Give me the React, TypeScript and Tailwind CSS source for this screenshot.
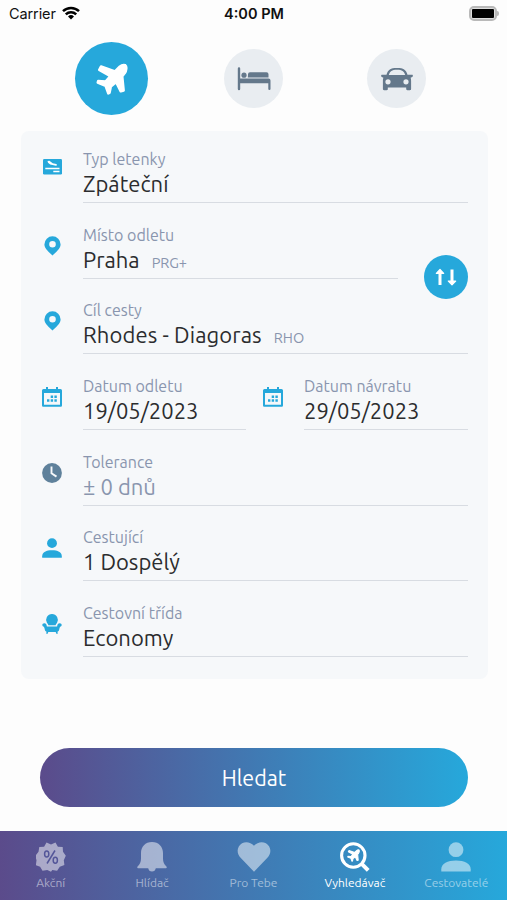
import React from 'react'
import clsx from 'clsx'

interface IconProps {
  className?: string
}

function PlaneIcon({ className }: IconProps) {
  return (
    <svg viewBox="0 0 32 32" className={className} fill="currentColor" stroke="currentColor" strokeWidth="2.600" strokeLinejoin="round">
      <path d="M29.300 2.300c-1.700-.7-4 .1-5.600 1.500L19 8.400 5 3.600 3.300 6.800 14.400 13.200l-4.800 5.300-7.400-.4-.4 1.400 7.800 3.400L12.300 30.300l1.200-.5 1.300-6.400 5.400-4.300 4.600 9.200 2.800-.8L26.200 13.300l2.600-3.300c1.400-2 2.200-6.600.5-7.700z" />
    </svg>
  )
}

function BedIcon({ className }: IconProps) {
  return (
    <svg viewBox="0 0 34 24" className={className} fill="currentColor">
      <path d="M.8 1.500a1.200 1.200 0 0 1 2.400 0v10h28.300a2 2 0 0 1 2 2V22a1.100 1.100 0 0 1-2.200 0v-5.700H3.200V22a1.200 1.200 0 0 1-2.400 0z" />
      <circle cx="7" cy="8.200" r="2.600" />
      <path d="M13 5.200h16.500a2 2 0 0 1 2 2v3.200H10.800l.2-3.200a2 2 0 0 1 2-2z" />
    </svg>
  )
}

function CarIcon({ className }: IconProps) {
  return (
    <svg viewBox="0 0 32 24" className={className} fill="currentColor" fillRule="evenodd">
      <path d="M5.500 7.700C7 2.800 9.400 1 16 1s9 1.800 10.500 6.700h4.700c.9 0 .9 2 0 2.300l-1.600.7c.4.900.5 1.800.5 3.300v8c0 .8-.5 1.200-1.200 1.200h-2.500c-.8 0-1.200-.5-1.200-1.200v-1.500H6.800V22c0 .8-.5 1.200-1.200 1.200H3.100c-.7 0-1.200-.4-1.200-1.200v-8c0-1.500.1-2.400.5-3.300L.8 10c-.9-.3-.9-2.300 0-2.300zm2.300.300h16.400C23 4.200 21.300 2.700 16 2.700S9 4.200 7.800 8zM7 12.200a2.600 2.600 0 1 0 0 5.200 2.600 2.600 0 0 0 0-5.200zm18 0a2.600 2.600 0 1 0 0 5.200 2.600 2.600 0 0 0 0-5.200z" />
    </svg>
  )
}

function TicketIcon() {
  return (
    <svg viewBox="0 0 19 16" className="h-4 w-[19px]">
      <rect width="19" height="15.500" rx="1.200" fill="#26a8db" />
      <path d="M4.500 2l1.900-.2 3.300 2.400 3.500.8c1.200.5.9 1.800-.3 1.700L7.200 5.600 5 3.800z" fill="white" />
      <path d="M2.300 9.500h14.200M10.300 12.500h6.200" stroke="white" strokeWidth="1.700" />
    </svg>
  )
}

function PinIcon() {
  return (
    <svg viewBox="0 0 17 20" className="h-5 w-[17px]">
      <path d="M8.500.300A8.100 8.100 0 0 0 .400 8.400c0 4.300 4.800 7.600 8.100 11.200 3.300-3.600 8.100-6.900 8.100-11.200A8.100 8.100 0 0 0 8.500.300zm0 4.700a3.300 3.300 0 1 1 0 6.600 3.300 3.300 0 0 1 0-6.600z" fill="#26a8db" fillRule="evenodd" />
    </svg>
  )
}

function CalendarIcon() {
  return (
    <svg viewBox="0 0 20 20" className="h-5 w-5" fill="#26a8db">
      <path d="M1.500 2H4V0h2v2h8V0h2v2h2.500A1.500 1.500 0 0 1 20 3.500v15a1.300 1.300 0 0 1-1.500 1.300h-17A1.300 1.300 0 0 1 0 18.500v-15A1.500 1.500 0 0 1 1.500 2zM2 6v11.800h16V6z" fillRule="evenodd" />
      <path d="M8.700 8.500h2.400v2.400H8.700zM12.400 8.500h2.400v2.400h-2.400zM5 12.300h2.400v2.400H5zM8.700 12.300h2.400v2.400H8.700zM12.400 12.300h2.400v2.400h-2.400z" />
    </svg>
  )
}

function ClockIcon() {
  return (
    <svg viewBox="0 0 20 20" className="h-5 w-5">
      <circle cx="10" cy="10" r="9.900" fill="#5f819b" />
      <path d="M9.500 3.500v6.700l5 3.400" fill="none" stroke="#f6f8fa" strokeWidth="1.900" />
    </svg>
  )
}

function PersonIcon({ className }: IconProps) {
  return (
    <svg viewBox="0 0 30 30" className={className} fill="currentColor">
      <circle cx="15" cy="7.700" r="7.400" />
      <path d="M.3 29.500v-2.300c0-5.700 6.200-8.700 14.700-8.700s14.700 3 14.700 8.700v2.300z" />
    </svg>
  )
}

function ArmchairIcon() {
  return (
    <svg viewBox="0 0 20 20" className="h-5 w-5" fill="#26a8db">
      <path d="M10 0a5.900 5.900 0 0 1 5 9c-.8.600-1.200 1.300-1.400 2.300H6.400C6.200 10.300 5.800 9.600 5 9A5.900 5.900 0 0 1 10 0z" />
      <path d="M2.300 9.300c1.700 0 2.200.8 2.600 3.200h10.200c.4-2.400.9-3.200 2.600-3.200 2.200 0 2.600 2.400 1 3.300-.8.400-1 .9-1.200 1.700-.3 2-.8 3.200-2 3.500l.3 1.900h-1.500l-.6-1.800H6.300l-.6 1.800H4.200l.3-1.900c-1.200-.3-1.700-1.500-2-3.500-.2-.8-.4-1.300-1.200-1.700-1.600-.9-1.200-3.300 1-3.300z" />
    </svg>
  )
}

function SwapIcon() {
  return (
    <svg viewBox="0 0 22 18" className="h-[18px] w-[22px]" fill="white" stroke="white" strokeLinejoin="round">
      <path d="M5 17V4M17 1.500v12" strokeWidth="3" />
      <path d="M5 1.500L1.300 5.300h7.400zM17 16.800l-3.700-3.800h7.400z" strokeWidth="1.200" />
    </svg>
  )
}

function BadgeIcon() {
  return (
    <svg viewBox="0 0 30 30" className="h-[30px] w-[30px]">
      <path d="M15 2.500L19.500.500l2.400 4.200 4.800.300.300 4.800 2.800 4-2 4.500.600 4.800-4.600 1.700-2.700 4-4.800-.8L15 29.800 11.300 28l-4.800.800-2.400-4-4.200-1.700.600-4.800-1.200-4.500L2.500 9.800 3.300 5l4.800-.3L10.500.5z" fill="currentColor" />
      <g fill="none" stroke="#545699" strokeWidth="1.500">
        <ellipse cx="10.700" cy="12" rx="2.100" ry="3" />
        <ellipse cx="19.300" cy="18.300" rx="2.100" ry="3" />
        <path d="M19 8.500l-8 13" />
      </g>
    </svg>
  )
}

function BellIcon() {
  return (
    <svg viewBox="0 0 30 30" className="h-[30px] w-[30px]" fill="currentColor">
      <path d="M15 0C8.300 0 4 4.800 4 11v5.500c0 3.500-1.200 5.700-3.200 7.700C-.2 25.200.2 26.300 1.500 26.300h9.700c.4 2 1.700 3.300 3.800 3.300s3.400-1.300 3.800-3.300h9.700c1.300 0 1.700-1.100.7-2.100-2-2-3.200-4.200-3.200-7.700V11C26 4.800 21.700 0 15 0z" />
    </svg>
  )
}

function HeartIcon() {
  return (
    <svg viewBox="0 0 34 30" className="h-[30px] w-[34px]" fill="currentColor">
      <path d="M17 3.700C12.500-1.500 4.800-.800 1.800 4.400c-2.200 4-1.100 8.300 1.800 11.400L17 29.800l13.400-14c2.900-3.100 4-7.400 1.800-11.400C29.200-.8 21.500-1.500 17 3.700z" />
    </svg>
  )
}

function SearchPlaneIcon() {
  return (
    <div className="relative h-[30px] w-[30px]">
      <svg viewBox="0 0 30 30" className="h-[30px] w-[30px]" fill="none" stroke="currentColor">
        <circle cx="13.300" cy="13.500" r="11.700" strokeWidth="3.100" />
        <path d="M21.500 21.700l6.700 6.700" strokeWidth="4" />
      </svg>
      <PlaneIcon className="absolute left-[7px] top-[7px] h-[13px] w-[13px]" />
    </div>
  )
}

interface FieldProps {
  icon: React.ReactNode
  iconClass?: string
  label: string
  value: string
  valueClass?: string
  code?: string
  className?: string
}

function Field({ icon, iconClass = 'mt-[11px]', label, value, valueClass, code, className }: FieldProps) {
  return (
    <div className={clsx('flex', className)}>
      <div className={clsx('flex h-5 w-5 shrink-0 items-center justify-center text-[#26a8db]', iconClass)}>{icon}</div>
      <div className="ml-[21px] h-[54px] flex-1 whitespace-nowrap border-b border-[#d8dce2]">
        <div className="h-5 text-base leading-5 text-[#8995ae]">{label}</div>
        <div className="flex h-7 items-baseline pt-px text-[22px] leading-7 text-[#2b2c2e]">
          <span className={valueClass}>{value}</span>
          {code && <span className="ml-3 text-[14.500px] text-[#8995ae]">{code}</span>}
        </div>
      </div>
    </div>
  )
}

const tabs = [
  { label: 'Akční', icon: <BadgeIcon /> },
  { label: 'Hlídač', icon: <BellIcon /> },
  { label: 'Pro Tebe', icon: <HeartIcon /> },
  { label: 'Vyhledávač', icon: <SearchPlaneIcon />, active: true },
  { label: 'Cestovatelé', icon: <PersonIcon className="h-[30px] w-[30px]" /> },
]

export default function App() {
  return (
    <div className="flex h-[900px] w-[507px] flex-col overflow-hidden bg-[#fdfdfd] font-['Ubuntu','Noto_Sans',sans-serif]">
      <header className="grid h-7 grid-cols-3 items-center pl-[9px] pr-[8px] font-['Inter',sans-serif] text-[14.500px] text-[#111]">
        <div className="flex items-center gap-[6px]">
          <span className="tracking-[-0.1px]">Carrier</span>
          <svg viewBox="0 0 18 14" className="mb-[2px] h-[14px] w-[18px]" fill="none" stroke="black" strokeWidth="2.500">
            <path d="M1 5.200a11.500 11.500 0 0 1 16 0M3.800 8.300a7.500 7.500 0 0 1 10.400 0" />
            <path d="M9 13.500l-3-3a4.300 4.300 0 0 1 6 0z" fill="black" stroke="none" />
          </svg>
        </div>
        <div className="text-center font-semibold">4:00 PM</div>
        <div className="mb-[2px] flex items-center justify-end">
          <div className="h-[15px] w-[28px] rounded-[5px] border-2 border-[#b9b9b9] bg-[#dedede] p-px">
            <div className="h-full rounded-[1px] bg-black" />
          </div>
          <div className="h-[5px] w-[2px] rounded-r-full bg-[#b9b9b9]" />
        </div>
      </header>

      <div className="mb-[2px] flex h-[101px] items-center pl-[75px]">
        <button className="flex h-[73px] w-[73px] items-center justify-center rounded-full bg-[#26a8db] text-white">
          <PlaneIcon className="h-8 w-8" />
        </button>
        <button className="ml-[76px] flex h-[59px] w-[59px] items-center justify-center rounded-full bg-[#e9edf1] text-[#64788b]">
          <BedIcon className="h-6 w-[34px]" />
        </button>
        <button className="ml-[84px] flex h-[59px] w-[59px] items-center justify-center rounded-full bg-[#e9edf1] text-[#64788b]">
          <CarIcon className="h-6 w-8" />
        </button>
      </div>

      <main className="relative ml-[21px] flex h-[548px] w-[467px] flex-col gap-[21.700px] rounded-lg bg-[#f6f8fa] pl-[21px] pr-5 pt-[17.900px]">
        <Field icon={<TicketIcon />} iconClass="mt-[8px]" label="Typ letenky" value="Zpáteční" />
        <Field icon={<PinIcon />} label="Místo odletu" value="Praha" code="PRG+" className="mr-[70px]" />
        <Field icon={<PinIcon />} label="Cíl cesty" value="Rhodes - Diagoras" valueClass="tracking-[0.1px]" code="RHO" />
        <div className="flex gap-[17px]">
          <Field icon={<CalendarIcon />} label="Datum odletu" value="19/05/2023" className="w-[204px]" />
          <Field icon={<CalendarIcon />} label="Datum návratu" value="29/05/2023" className="flex-1" />
        </div>
        <Field icon={<ClockIcon />} label="Tolerance" value="± 0 dnů" valueClass="text-[#8995ae]" />
        <Field icon={<PersonIcon className="h-5 w-5" />} label="Cestující" value="1 Dospělý" />
        <Field icon={<ArmchairIcon />} label="Cestovní třída" value="Economy" />
        <button className="absolute right-5 top-[124px] flex h-11 w-11 items-center justify-center rounded-full bg-[#26a8db]">
          <SwapIcon />
        </button>
      </main>

      <button className="mx-auto mt-[69px] h-[59px] w-[428px] rounded-full bg-linear-to-r/srgb from-[#5b4b8b] to-[#26a8db] pl-px pt-px text-[21.500px] text-white">
        Hledat
      </button>

      <nav className="mt-auto flex h-[69px] bg-linear-to-r/srgb from-[#5b4b8b] to-[#26a8db]">
        {tabs.map((tab) => (
          <div
            key={tab.label}
            className={clsx('flex flex-1 flex-col items-center pt-[11px] text-[12px]', tab.active ? 'text-white' : 'text-white/50')}
          >
            {tab.icon}
            <span className="mt-[3px] whitespace-nowrap leading-4">{tab.label}</span>
          </div>
        ))}
      </nav>
    </div>
  )
}
